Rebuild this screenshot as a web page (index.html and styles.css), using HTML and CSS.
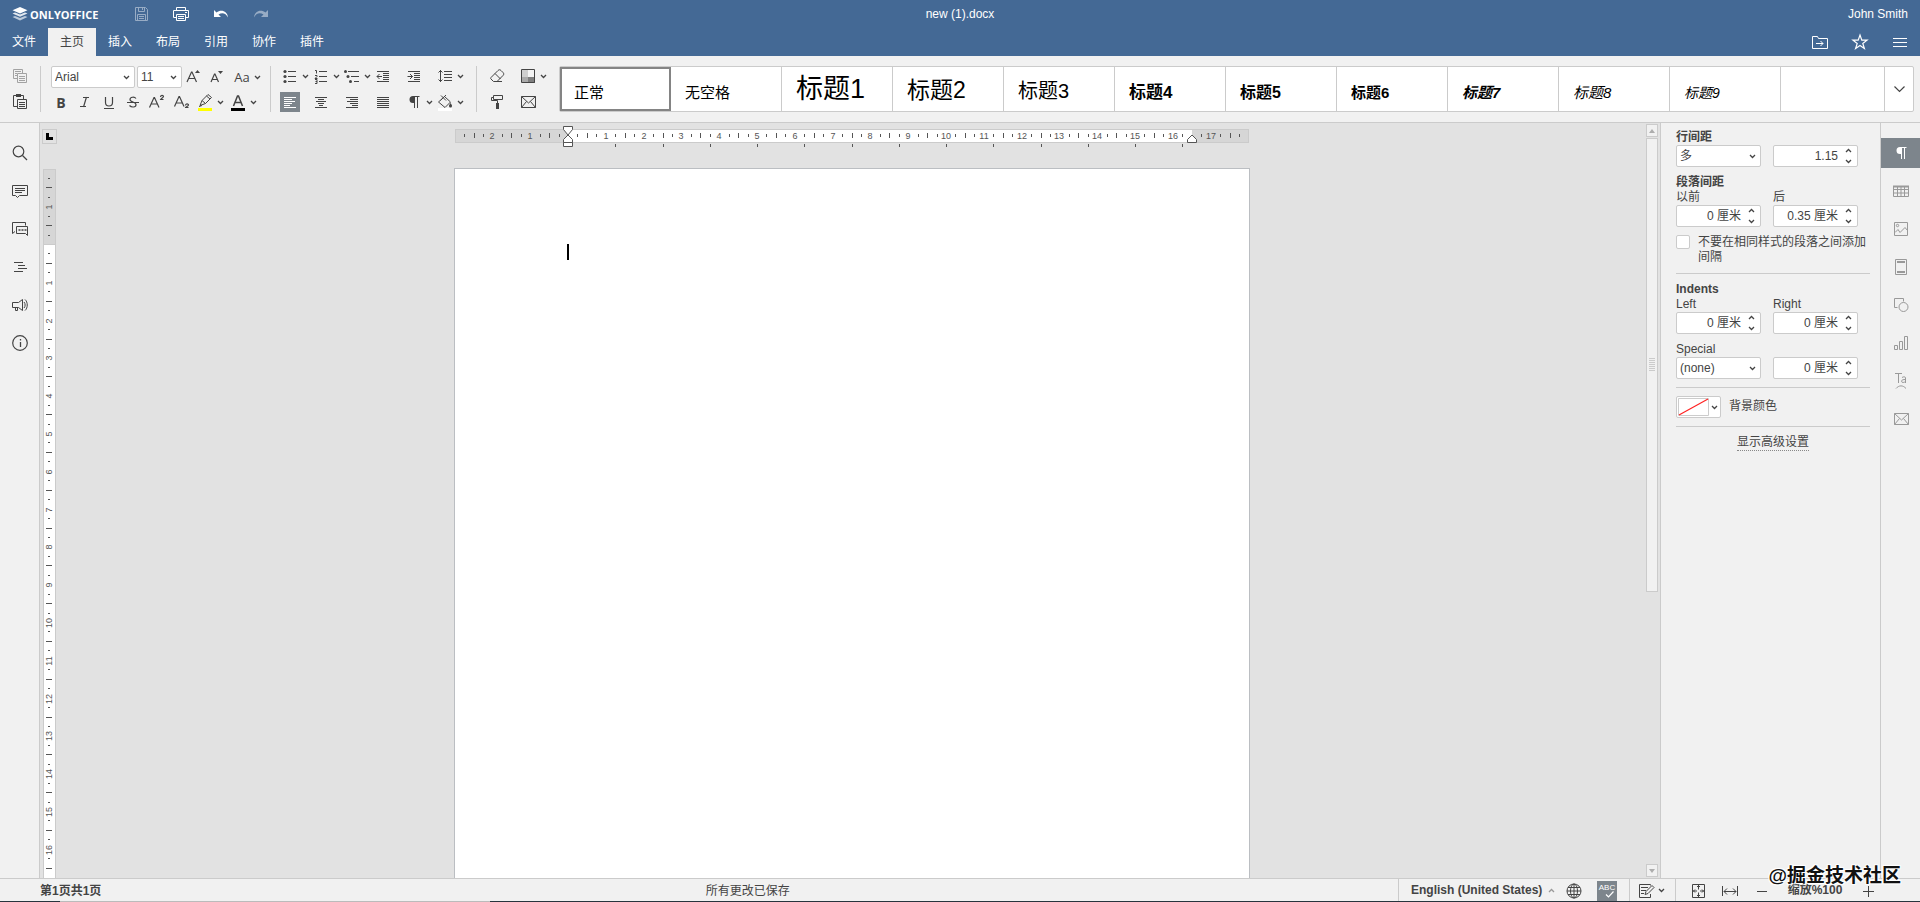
FILE: index.html
```html
<!DOCTYPE html>
<html lang="zh">
<head>
    <meta charset="UTF-8">
    <meta name="viewport" content="width=device-width, initial-scale=1.0">
    <title>new (1).docx</title>
    <link rel="stylesheet" href="styles.css">
</head>
<body>

    <!-- shared icons -->
    <svg class="sprite" aria-hidden="true">
        <symbol id="caret" viewBox="0 0 7 5"><path d="M1 1l2.5 2.5L6 1" fill="none" stroke="currentColor" stroke-width="1.3"/></symbol>
        <symbol id="caret-up" viewBox="0 0 7 5"><path d="M1 4l2.500-2.500L6 4" fill="none" stroke="currentColor" stroke-width="1.3"/></symbol>
        <symbol id="mail" viewBox="0 0 20 20"><path d="M3.500 4.500h14v11h-14zM3.500 4.500l7 6.500 7-6.500M3.500 15.500l5-6M17.500 15.500l-5-6" fill="none" stroke="currentColor"/></symbol>
        <symbol id="pilcrow" viewBox="0 0 20 20"><path d="M13.500 4v12M10.500 4v12M9 4.500h6.500" fill="none" stroke="currentColor"/><path d="M10.500 4H9a3.500 3.500 0 0 0 0 7h1.500z" fill="currentColor"/></symbol>
    </svg>

    <header class="header">
        <div class="title-row">
            <a class="logo" href="#">
                <svg width="16" height="16" viewBox="0 0 16 16"><path d="M8 1l7.500 3.300L8 7.600.5 4.300z" fill="#fff"/><path d="M.5 7.500L3 6.400l5 2.200 5-2.200 2.500 1.100L8 10.800z" fill="#fff" opacity=".85"/><path d="M.5 11L3 9.900l5 2.200 5-2.200 2.500 1.100L8 14.500z" fill="#fff" opacity=".65"/></svg>
                ONLYOFFICE
            </a>
            <div class="quick">
                <button class="icon-btn disabled" aria-label="保存"><svg width="20" height="20" viewBox="0 0 20 20" fill="none" stroke="currentColor"><path d="M4.500 3.500h10l2 2v11h-12zM7.500 3.500v4h6v-4M11.500 4v2M6.500 16.500v-6h8v6M8 12.500h5M8 14.500h5"/></svg></button>
                <button class="icon-btn" aria-label="打印"><svg width="20" height="20" viewBox="0 0 20 20" fill="none" stroke="currentColor"><path d="M5.500 6.500v-3h9v3M5.500 13.500h-3v-7h15v7h-3M5.500 10.500h9v6h-9zM7 12.500h6M7 14.500h6M14 8.500h2"/></svg></button>
                <button class="icon-btn" aria-label="撤消"><svg width="20" height="20" viewBox="0 0 20 20"><path d="M3 6v7h7L7.500 10.500C11 8 15 9 17 13.500 16.500 7 10 5 5.500 8.500z" fill="currentColor"/></svg></button>
                <button class="icon-btn disabled" aria-label="重做"><svg width="20" height="20" viewBox="0 0 20 20"><path d="M17 6v7h-7l2.500-2.500C9 8 5 9 3 13.500 3.500 7 10 5 14.500 8.500z" fill="currentColor"/></svg></button>
            </div>
            <div class="doc-name">new (1).docx</div>
            <div class="user">John Smith</div>
        </div>
        <div class="tab-row">
            <nav class="tabs">
                <button class="tab">文件</button>
                <button class="tab active">主页</button>
                <button class="tab">插入</button>
                <button class="tab">布局</button>
                <button class="tab">引用</button>
                <button class="tab">协作</button>
                <button class="tab">插件</button>
            </nav>
            <div class="header-tools">
                <button class="icon-btn" aria-label="打开文件位置"><svg width="20" height="20" viewBox="0 0 20 20" fill="none" stroke="currentColor"><path d="M2.500 4.500h5l1 2h9v10h-15zM6 11.500h7M10.500 9l2.500 2.500-2.500 2.500"/></svg></button>
                <button class="icon-btn" aria-label="收藏"><svg width="20" height="20" viewBox="0 0 20 20" fill="none" stroke="currentColor" stroke-width="1.200"><path d="M10 3l1.800 5.200h5.200l-4.200 3.200 1.600 5.100L10 13.400l-4.400 3.100 1.600-5.100L3 8.200h5.200z"/></svg></button>
                <button class="icon-btn" aria-label="视图设置"><svg width="20" height="20" viewBox="0 0 20 20" stroke="currentColor"><path d="M3 6.500h14M3 10.500h14M3 14.500h14"/></svg></button>
            </div>
        </div>
    </header>

    <div class="toolbar">
        <div class="group clipboard">
            <button class="icon-btn disabled" aria-label="复制"><svg width="20" height="20" viewBox="0 0 20 20" fill="none" stroke="currentColor"><path d="M7 12.500H3.500v-9h9V7M5 5.500h6M5 7.500h2M5 9.500h2M7.500 7.500h9v9h-9zM9 10.500h6M9 12.500h6M9 14.500h6"/></svg></button>
            <button class="icon-btn" aria-label="粘贴"><svg width="20" height="20" viewBox="0 0 20 20" fill="none" stroke="currentColor"><path d="M7 14.500H3.500v-11h10V7"/><path d="M6 3.500h5" stroke-width="3"/><path d="M7.500 7.500h9v9h-9zM9 10.500h6M9 12.500h6M9 14.500h6"/></svg></button>
        </div>

        <div class="group font-group">
            <div class="row">
                <select class="combo font-name" aria-label="字体"><option>Arial</option></select>
                <select class="combo font-size" aria-label="字号"><option>11</option></select>
                <button class="icon-btn" aria-label="增大字号"><svg width="20" height="20" viewBox="0 0 20 20" fill="none" stroke="currentColor" stroke-width="1.200"><path d="M3 15L7.500 5h.5L12.500 15M5 11.500h6"/><path d="M11 6h5l-2.500-3z" fill="currentColor" stroke="none"/></svg></button>
                <button class="icon-btn" aria-label="减小字号"><svg width="20" height="20" viewBox="0 0 20 20" fill="none" stroke="currentColor" stroke-width="1.200"><path d="M3 15L6.500 7h.5l3.500 8M4.500 12.500h4.500"/><path d="M10 4h5l-2.500 3z" fill="currentColor" stroke="none"/></svg></button>
                <div class="split"><button class="icon-btn glyph" aria-label="更改大小写">Aa</button><button class="caret-btn" aria-label="更多"><svg><use href="#caret"/></svg></button></div>
            </div>
            <div class="row format-row">
                <button class="icon-btn glyph bold" aria-label="加粗">B</button>
                <button class="icon-btn" aria-label="斜体"><svg width="20" height="20" viewBox="0 0 20 20" fill="none" stroke="currentColor"><path d="M8 5.500h6M5 14.500h6M11.500 5l-3 10" stroke-width="1.200"/></svg></button>
                <button class="icon-btn" aria-label="下划线"><svg width="20" height="20" viewBox="0 0 20 20" fill="none" stroke="currentColor"><path d="M6.500 5v5.500a3.500 3.500 0 0 0 7 0V5M5 16.500h10" stroke-width="1.200"/></svg></button>
                <button class="icon-btn" aria-label="删除线"><svg width="20" height="20" viewBox="0 0 20 20" fill="none" stroke="currentColor" stroke-width="1.200"><path d="M13 6.500C11.500 4.500 7 4.800 7 7.500c0 1.500 1.500 2 3 2.500s3 1.200 3 2.700c0 2.800-4.500 3-6.500.8M4 10.500h12"/></svg></button>
                <button class="icon-btn" aria-label="上标"><svg width="20" height="20" viewBox="0 0 20 20" fill="none" stroke="currentColor" stroke-width="1.200"><path d="M2.500 15.500L7 5.500h.5L12 15.500M4.500 12h5.500M13.500 5c0-2 3-2 3-.5 0 1-3 2.500-3 3h3"/></svg></button>
                <button class="icon-btn" aria-label="下标"><svg width="20" height="20" viewBox="0 0 20 20" fill="none" stroke="currentColor" stroke-width="1.200"><path d="M3.500 14.500L8 4.500h.5L13 14.500M5.500 11h5.500M14.500 13.500c0-2 3-2 3-.5 0 1-3 2-3 2.500h3"/></svg></button>
                <div class="split"><button class="icon-btn" aria-label="突出显示颜色"><svg width="20" height="20" viewBox="0 0 20 20" fill="none" stroke="currentColor"><path d="M5 13.500l2-5L13 2.500l3.500 3-6 6zM7 8.500l3.500 3M11.500 4l3.500 3M4 14.500l3-1"/><path d="M3 17.500h14" stroke="#ff0" stroke-width="3"/></svg></button><button class="caret-btn" aria-label="更多"><svg><use href="#caret"/></svg></button></div>
                <div class="split"><button class="icon-btn" aria-label="字体颜色"><svg width="20" height="20" viewBox="0 0 20 20" fill="none" stroke="currentColor" stroke-width="1.500"><path d="M5.500 14l4-10h1l4 10M7 10.500h6"/><path d="M3 17.500h14" stroke="#000" stroke-width="3"/></svg></button><button class="caret-btn" aria-label="更多"><svg><use href="#caret"/></svg></button></div>
            </div>
        </div>

        <div class="group para-group">
            <div class="split"><button class="icon-btn" aria-label="项目符号"><svg width="20" height="20" viewBox="0 0 20 20" stroke="currentColor"><path d="M8 5.500h8M8 10.500h8M8 15.500h8"/><g fill="currentColor" stroke="none"><circle cx="5" cy="5.500" r="1.600"/><circle cx="5" cy="10.500" r="1.600"/><circle cx="5" cy="15.500" r="1.600"/></g></svg></button><button class="caret-btn" aria-label="更多"><svg><use href="#caret"/></svg></button></div>
            <div class="split"><button class="icon-btn" aria-label="编号"><svg width="20" height="20" viewBox="0 0 20 20" fill="none" stroke="currentColor"><path d="M8 5.500h8M8 10.500h8M8 15.500h8M4 4.500h1.500v3M4 9.500h2v1l-2 2h2.500M4 13.500h2v4H4M4.500 15.500H6"/></svg></button><button class="caret-btn" aria-label="更多"><svg><use href="#caret"/></svg></button></div>
            <div class="split"><button class="icon-btn" aria-label="多级列表"><svg width="20" height="20" viewBox="0 0 20 20" stroke="currentColor"><path d="M6 5.500h11M9 10.500h8M12 15.500h5"/><g fill="currentColor" stroke="none"><circle cx="3.500" cy="5.500" r="1.500"/><circle cx="6" cy="10.500" r="1.500"/><circle cx="8.500" cy="15.500" r="1.500"/></g></svg></button><button class="caret-btn" aria-label="更多"><svg><use href="#caret"/></svg></button></div>
            <div class="split"><button class="icon-btn" aria-label="减少缩进"><svg width="20" height="20" viewBox="0 0 20 20" fill="none" stroke="currentColor"><path d="M4 5.500h12M10 7.500h6M10 9.500h6M10 11.500h6M10 13.500h6M4 15.500h12M4 10.500h5M6.500 8L4 10.500 6.500 13"/></svg></button></div>
            <div class="split"><button class="icon-btn" aria-label="增加缩进"><svg width="20" height="20" viewBox="0 0 20 20" fill="none" stroke="currentColor"><path d="M4 5.500h12M10 7.500h6M10 9.500h6M10 11.500h6M10 13.500h6M4 15.500h12M3.500 10.500h5M6 8l2.500 2.500L6 13"/></svg></button></div>
            <div class="split"><button class="icon-btn" aria-label="行间距"><svg width="20" height="20" viewBox="0 0 20 20" fill="none" stroke="currentColor"><path d="M9 5.500h8M9 8.500h8M9 11.500h8M9 14.500h8M5.500 4v12M3.500 6.500l2-2 2 2M3.500 13.500l2 2 2-2"/></svg></button><button class="caret-btn" aria-label="更多"><svg><use href="#caret"/></svg></button></div>

            <div class="split"><button class="icon-btn pressed" aria-label="左对齐"><svg width="20" height="20" viewBox="0 0 20 20" stroke="currentColor"><path d="M4 5.500h12M4 7.500h8M4 9.500h11M4 11.500h8M4 13.500h6M4 15.500h12"/></svg></button></div>
            <div class="split"><button class="icon-btn" aria-label="居中"><svg width="20" height="20" viewBox="0 0 20 20" stroke="currentColor"><path d="M4 5.500h12M7 7.500h6M5 9.500h10M7 11.500h6M8 13.500h4M4 15.500h12"/></svg></button></div>
            <div class="split"><button class="icon-btn" aria-label="右对齐"><svg width="20" height="20" viewBox="0 0 20 20" stroke="currentColor"><path d="M4 5.500h12M8 7.500h8M5 9.500h11M8 11.500h8M10 13.500h6M4 15.500h12"/></svg></button></div>
            <div class="split"><button class="icon-btn" aria-label="两端对齐"><svg width="20" height="20" viewBox="0 0 20 20" stroke="currentColor"><path d="M4 5.500h12M4 7.500h12M4 9.500h12M4 11.500h12M4 13.500h12M4 15.500h12"/></svg></button></div>
            <div class="split"><button class="icon-btn" aria-label="非打印字符"><svg width="20" height="20"><use href="#pilcrow"/></svg></button><button class="caret-btn" aria-label="更多"><svg><use href="#caret"/></svg></button></div>
            <div class="split"><button class="icon-btn" aria-label="底纹颜色"><svg width="20" height="20" viewBox="0 0 20 20" fill="none" stroke="currentColor"><path d="M3 17.500h14" stroke="#fff" stroke-width="3"/><path d="M3.500 10l6-5.500 6 5.500-5.500 5.500zM6 3.500l5 5M11 3L5.500 8.500"/><path d="M15.500 11c1 1.500 1.500 2 1.500 3a1.500 1.500 0 0 1-3 0c0-1 .5-1.500 1.500-3z" fill="currentColor" stroke="none"/></svg></button><button class="caret-btn" aria-label="更多"><svg><use href="#caret"/></svg></button></div>
        </div>

        <div class="group misc-group">
            <div class="split"><button class="icon-btn" aria-label="清除样式"><svg width="20" height="20" viewBox="0 0 20 20" fill="none" stroke="currentColor"><path d="M4 11.500l7-7c1-1 2-1 3 0l2 2c1 1 1 2 0 3l-6 6H6.500l-2.500-2.500c-.5-.5-.5-1 0-1.500zM8 7.500l5.500 5.500M10 15.500h5"/></svg></button></div>
            <div class="split"><button class="icon-btn" aria-label="颜色方案"><svg width="20" height="20" viewBox="0 0 20 20"><path d="M4 4h6v7H4z" fill="#cfcfcf"/><path d="M10 4h7v7h-7z" fill="#f4f4f4"/><path d="M4 11h6v6H4z" fill="#aaa"/><path d="M10 11h7v6h-7z" fill="#808080"/><path d="M3.500 3.500h13v13h-13z" fill="none" stroke="currentColor"/></svg></button><button class="caret-btn" aria-label="更多"><svg><use href="#caret"/></svg></button></div>
            <div class="split"><button class="icon-btn" aria-label="复制样式"><svg width="20" height="20" viewBox="0 0 20 20" fill="none" stroke="currentColor"><path d="M6.500 3.500h9v4h-9zM6 5.500H4.500v3h6V11"/><path d="M10.500 11v6" stroke-width="3"/></svg></button></div>
            <div class="split"><button class="icon-btn" aria-label="邮件合并"><svg width="20" height="20"><use href="#mail"/></svg></button></div>
        </div>

        <div class="gallery">
            <div class="styles">
                <button class="style-item selected"><span class="s-normal">正常</span></button>
                <button class="style-item"><span class="s-normal">无空格</span></button>
                <button class="style-item"><span class="s-h1">标题1</span></button>
                <button class="style-item"><span class="s-h2">标题2</span></button>
                <button class="style-item"><span class="s-h3">标题3</span></button>
                <button class="style-item"><span class="s-h4">标题4</span></button>
                <button class="style-item"><span class="s-h5">标题5</span></button>
                <button class="style-item"><span class="s-h6">标题6</span></button>
                <button class="style-item"><span class="s-h7">标题7</span></button>
                <button class="style-item"><span class="s-h8">标题8</span></button>
                <button class="style-item"><span class="s-h9">标题9</span></button>
                <button class="style-item" aria-label="标题"></button>
            </div>
            <button class="gallery-more" aria-label="更多样式"><svg width="13" height="9" viewBox="0 0 13 9"><path d="M1.500 1.500l5 5 5-5" fill="none" stroke="currentColor" stroke-width="1.200"/></svg></button>
        </div>
    </div>

    <main class="workspace">
        <aside class="left-menu">
            <button class="icon-btn" aria-label="搜索"><svg width="20" height="20" viewBox="0 0 20 20" fill="none" stroke="currentColor" stroke-width="1.200"><circle cx="8.500" cy="8.500" r="5.300"/><path d="M12.500 12.500l4.500 4.500"/></svg></button>
            <button class="icon-btn" aria-label="批注"><svg width="20" height="20" viewBox="0 0 20 20" fill="none" stroke="currentColor"><path d="M2.500 4.500h15v10h-8l-2 2-2-2h-3zM5 7.500h10M5 9.500h10M5 11.500h7"/></svg></button>
            <button class="icon-btn" aria-label="聊天"><svg width="20" height="20" viewBox="0 0 20 20" fill="none" stroke="currentColor"><path d="M5 12.500l-2.500 2v-11h13v3M6.500 7.500h11v9l-2-2h-9z"/><path d="M8.500 11h2M11.500 11h2M14.500 11h2" stroke-width="1.500"/></svg></button>
            <button class="icon-btn" aria-label="导航"><svg width="20" height="20" viewBox="0 0 20 20" stroke="currentColor"><path d="M4 5.500h9M8 8.500h7M8 11.500h9M4 14.500h9"/></svg></button>
            <button class="icon-btn" aria-label="反馈"><svg width="20" height="20" viewBox="0 0 20 20" fill="none" stroke="currentColor"><path d="M2.500 7.500h6l4-3v11l-4-3h-6zM5.500 12.500v3h2v-3M14 7c1.500 1.500 1.500 4.500 0 6M15 4.500c3 2.500 3 8.500 0 11"/></svg></button>
            <button class="icon-btn" aria-label="关于"><svg width="20" height="20" viewBox="0 0 20 20" fill="none" stroke="currentColor"><circle cx="10" cy="10" r="7.300" stroke-width="1.200"/><path d="M10.500 9v5M10.500 6v1.500" stroke-width="1.300"/></svg></button>
        </aside>

        <section class="editor">
            <div class="corner"><button class="tab-type" aria-label="制表符"><svg width="7" height="7" viewBox="0 0 7 7"><path d="M1.500 0v5.500H7" fill="none" stroke="#000" stroke-width="3"/></svg></button></div>
            <div class="h-ruler"><svg id="hRuler" width="794" height="24"></svg></div>
            <div class="v-ruler"><svg id="vRuler" width="13"></svg></div>
            <div class="canvas">
                <div class="page"><div class="cursor"></div></div>
            </div>
            <div class="scrollbar">
                <button class="scroll-btn" aria-label="向上"><svg width="6" height="4"><path d="M3 0l3 4H0z" fill="#adadad"/></svg></button>
                <div class="track"><div class="thumb"></div></div>
                <button class="scroll-btn" aria-label="向下"><svg width="6" height="4"><path d="M3 4l3-4H0z" fill="#adadad"/></svg></button>
            </div>
        </section>

        <aside class="settings">
            <div class="field-row">
                <div class="field"><label class="strong" for="lineRule">行间距</label><select class="combo" id="lineRule"><option>多</option></select></div>
                <div class="field end"><div class="spin"><input type="text" value="1.15" aria-label="行间距值"><div class="arrows"><button aria-label="增加"><svg><use href="#caret-up"/></svg></button><button aria-label="减少"><svg><use href="#caret"/></svg></button></div></div></div>
            </div>
            <div class="block">
                <h3>段落间距</h3>
                <div class="field-row">
                    <div class="field"><label for="before">以前</label><div class="spin"><input type="text" id="before" value="0 厘米"><div class="arrows"><button aria-label="增加"><svg><use href="#caret-up"/></svg></button><button aria-label="减少"><svg><use href="#caret"/></svg></button></div></div></div>
                    <div class="field"><label for="after">后</label><div class="spin"><input type="text" id="after" value="0.35 厘米"><div class="arrows"><button aria-label="增加"><svg><use href="#caret-up"/></svg></button><button aria-label="减少"><svg><use href="#caret"/></svg></button></div></div></div>
                </div>
            </div>
            <label class="check"><input type="checkbox"><span>不要在相同样式的段落之间添加间隔</span></label>
            <hr>
            <div class="block">
                <h3>Indents</h3>
                <div class="field-row">
                    <div class="field"><label for="left">Left</label><div class="spin"><input type="text" id="left" value="0 厘米"><div class="arrows"><button aria-label="增加"><svg><use href="#caret-up"/></svg></button><button aria-label="减少"><svg><use href="#caret"/></svg></button></div></div></div>
                    <div class="field"><label for="right">Right</label><div class="spin"><input type="text" id="right" value="0 厘米"><div class="arrows"><button aria-label="增加"><svg><use href="#caret-up"/></svg></button><button aria-label="减少"><svg><use href="#caret"/></svg></button></div></div></div>
                </div>
            </div>
            <div class="field-row">
                <div class="field"><label for="special">Special</label><select class="combo" id="special"><option>(none)</option></select></div>
                <div class="field end"><div class="spin"><input type="text" value="0 厘米" aria-label="Special value"><div class="arrows"><button aria-label="增加"><svg><use href="#caret-up"/></svg></button><button aria-label="减少"><svg><use href="#caret"/></svg></button></div></div></div>
            </div>
            <hr>
            <div class="color-row">
                <button class="color-btn" id="bgColor"><svg width="31" height="18" viewBox="0 0 31 18"><path d="M.5.500h30v17H.5z" fill="#fff" stroke="#ccc"/><path d="M1 17L30 1" stroke="#f22" stroke-width="1.200"/></svg><svg class="caret"><use href="#caret"/></svg></button>
                <label for="bgColor">背景颜色</label>
            </div>
            <hr>
            <div class="advanced"><a href="#">显示高级设置</a></div>
        </aside>

        <nav class="right-menu">
            <button class="pressed" aria-label="段落设置"><svg width="20" height="20"><use href="#pilcrow"/></svg></button>
            <button aria-label="表格设置"><svg width="20" height="20" viewBox="0 0 20 20" fill="none" stroke="currentColor"><path d="M2.500 5.500h15v10h-15zM2.500 8.500h15M2.500 12h15M6.500 6v9.500M10 6v9.500M13.500 6v9.500"/><path d="M2 5.500h16" stroke-width="2"/></svg></button>
            <button aria-label="图像设置"><svg width="20" height="20" viewBox="0 0 20 20" fill="none" stroke="currentColor"><path d="M3.500 3.500h13v13h-13zM4 13.500l3-3 2 3 5-5 2.500 3"/><circle cx="6.500" cy="6.500" r="1.200"/></svg></button>
            <button aria-label="页眉和页脚设置"><svg width="20" height="20" viewBox="0 0 20 20" fill="none" stroke="currentColor"><path d="M4.500 2.500h11v15h-11z"/><path d="M6 5h8M6 15h8" stroke-width="2"/></svg></button>
            <button aria-label="形状设置"><svg width="20" height="20" viewBox="0 0 20 20" fill="none" stroke="currentColor"><path d="M6.500 12.500h-3v-9h9v3"/><circle cx="12.500" cy="12" r="4.500"/></svg></button>
            <button aria-label="图表设置"><svg width="20" height="20" viewBox="0 0 20 20" fill="none" stroke="currentColor"><path d="M3.500 12.500h3v4h-3zM8.500 8.500h3v8h-3zM13.500 3.500h3v13h-3z"/></svg></button>
            <button aria-label="文本艺术设置"><svg width="20" height="20" viewBox="0 0 20 20" fill="none" stroke="currentColor"><path d="M4 2.500h7M7.500 2.500V12M11 6.500c1.500-1 3.500-1 3.500.5v5M14.500 8.500c-2 0-4 .2-4 1.800s3 1.500 4 0M5 17.500c3-3.500 7-3.500 10 0"/></svg></button>
            <button aria-label="邮件合并设置"><svg width="20" height="20"><use href="#mail"/></svg></button>
        </nav>
    </main>

    <footer class="statusbar">
        <div class="pages">第1页共1页</div>
        <div class="saved">所有更改已保存</div>
        <div class="cell lang-cell">
            <button class="lang">English (United States)<svg class="caret"><use href="#caret-up"/></svg></button>
            <button class="icon-btn" aria-label="文档语言"><svg width="20" height="20" viewBox="0 0 20 20" fill="none" stroke="currentColor"><circle cx="10" cy="10" r="7"/><ellipse cx="10" cy="10" rx="3.500" ry="7"/><path d="M10 3v14M3 10h14M4 6.500h12M4 13.500h12"/></svg></button>
            <button class="icon-btn pressed" aria-label="拼写检查"><svg width="20" height="20" viewBox="0 0 20 20"><text x="10" y="9" text-anchor="middle" class="abc">ABC</text><path d="M9 13.500l2.500 2.500 5-5.500" fill="none" stroke="currentColor" stroke-width="1.200"/></svg></button>
        </div>
        <div class="cell review-cell">
            <button class="icon-btn" aria-label="跟踪更改"><svg width="20" height="20" viewBox="0 0 20 20" fill="none" stroke="currentColor"><path d="M14.500 13v3.500h-11v-13h11v1M5 6.500h7M5 9.500h5M5 12.500h3M9 13.500l1-3L16 4.500l2 2-6 6z"/></svg></button><button class="caret-btn" aria-label="更多"><svg><use href="#caret"/></svg></button>
        </div>
        <div class="cell zoom-cell">
            <button class="icon-btn" aria-label="适合页面"><svg width="20" height="20" viewBox="0 0 20 20" fill="none" stroke="currentColor"><path d="M4.500 3.500h12v13h-12zM10.500 4v4.500M9 6l1.500-1.500L12 6M10.500 16v-4.500M9 14l1.500 1.500L12 14M5 10h4M7 8.500L5.500 10 7 11.500M16 10h-4M14 8.500l1.500 1.500L14 11.500"/></svg></button>
            <button class="icon-btn" aria-label="适合宽度"><svg width="20" height="20" viewBox="0 0 20 20" fill="none" stroke="currentColor"><path d="M2.500 5v10M17.500 5v10M4 10.500h12M7 7.500l-3 3 3 3M13 7.500l3 3-3 3"/></svg></button>
            <button class="icon-btn" aria-label="缩小"><svg width="20" height="20" viewBox="0 0 20 20" stroke="currentColor"><path d="M5 10.500h10"/></svg></button>
            <button class="zoom">缩放%100</button>
            <button class="icon-btn" aria-label="放大"><svg width="20" height="20" viewBox="0 0 20 20" stroke="currentColor"><path d="M5 10.500h11M10.500 5v11"/></svg></button>
        </div>
        <div class="watermark">@掘金技术社区</div>
    </footer>

    <script>
        const CM = 37.8; // 1 cm at 96 dpi

        function add(svg, name, attrs, text) {
            const el = document.createElementNS("http://www.w3.org/2000/svg", name);
            for (const key in attrs) {
                el.setAttribute(key, attrs[key]);
            }
            if (text) {
                el.textContent = text;
            }
            svg.appendChild(el);
        }

        function drawHorizontal() {
            const svg = document.getElementById("hRuler");
            const start = 113, end = 737, width = 794;
            add(svg, "rect", { x: 0.5, y: 3.5, width: width - 1, height: 13, class: "ruler-margin" });
            add(svg, "rect", { x: start, y: 4, width: end - start, height: 12, fill: "#fff" });
            for (let i = -11; i <= 71; i++) {
                const x = Math.round(start + i * CM / 4);
                if (i === 0 || x > width - 5 || Math.abs(x - end) < 5) continue;
                if (i % 4 === 0) {
                    add(svg, "text", { x: x, y: 13, "text-anchor": "middle" }, String(Math.abs(i / 4)));
                } else {
                    const h = i % 2 === 0 ? 5 : 3;
                    add(svg, "rect", { x: x, y: h === 5 ? 7 : 8, width: 1, height: h, class: "tick" });
                }
            }
            // default tab stops
            for (let i = 1; i <= 13; i++) {
                add(svg, "rect", { x: Math.round(start + i * CM * 1.25), y: 18, width: 1, height: 3, class: "tick" });
            }
            add(svg, "path", { d: "M108.5 .5h9v3l-4.500 5.500-4.500-5.500zM113 9l4.500 4.500v3h-9v-3zM108.500 16.500h9v4h-9z", class: "marker" });
            add(svg, "path", { d: "M737 9l4.500 4.500v3h-9v-3z", class: "marker" });
        }

        function drawVertical() {
            const svg = document.getElementById("vRuler");
            const start = 76;
            // only the visible part of the page
            const height = Math.min(1123, svg.parentNode.clientHeight - 1);
            svg.setAttribute("height", height);
            add(svg, "rect", { x: 0.5, y: 0.5, width: 12, height: 1122, fill: "#fff", stroke: "#cbcbcb" });
            add(svg, "rect", { x: 0.5, y: 0.5, width: 12, height: start - 1, class: "ruler-margin" });
            for (let i = -7; start + i * CM / 4 < height - 1; i++) {
                const y = Math.round(start + i * CM / 4);
                if (i === 0) continue;
                if (i % 4 === 0) {
                    if (y > height - 8) continue;
                    add(svg, "text", { transform: "translate(9 " + y + ") rotate(-90)", "text-anchor": "middle" }, String(Math.abs(i / 4)));
                } else {
                    const w = i % 2 === 0 ? 6 : 2;
                    add(svg, "rect", { x: w === 6 ? 3 : 5, y: y - 1, width: w, height: 1, class: "tick" });
                }
            }
        }

        drawHorizontal();
        drawVertical();
    </script>
</body>
</html>
```

FILE: styles.css
```css
* {
    box-sizing: border-box;
    margin: 0;
    padding: 0;
}

body {
    font-family: "Liberation Sans", "Noto Sans CJK SC", sans-serif;
    font-size: 12px;
    line-height: 15px;
    color: #444;
    background: #f1f1f1;
    display: flex;
    flex-direction: column;
    height: 100vh;
    overflow: hidden;
}

button, input, select {
    font: inherit;
    color: inherit;
    border: none;
    background: none;
    border-radius: 0;
}

button {
    cursor: pointer;
}

svg {
    display: block;
}

.sprite {
    position: absolute;
    width: 0;
    height: 0;
}

.icon-btn {
    width: 24px;
    height: 20px;
    flex: none;
    display: flex;
    align-items: center;
    justify-content: center;
}

.disabled {
    opacity: 0.45;
}

.pressed {
    background: #7d858c;
    color: #fff;
}

/* Header */
.header {
    background: #446995;
    color: #fff;
    flex: none;
}

.title-row {
    display: grid;
    grid-template-columns: 1fr auto 1fr;
    grid-template-areas: "left name user";
    align-items: center;
    height: 28px;
    padding: 0 12px;
}

.logo {
    grid-area: left;
    display: flex;
    align-items: center;
    gap: 2px;
    color: #fff;
    text-decoration: none;
    font-family: "Open Sans", sans-serif;
    font-size: 11px;
    font-weight: bold;
}

.quick {
    grid-area: left;
    display: flex;
    gap: 16px;
    margin-left: 117px;
}

.doc-name {
    grid-area: name;
}

.user {
    grid-area: user;
    text-align: right;
}

.tab-row {
    display: flex;
    justify-content: space-between;
    height: 28px;
}

.tabs {
    display: flex;
}

.tab {
    width: 48px;
    height: 28px;
}

.tab.active {
    background: #f1f1f1;
    color: #444;
}

.header-tools {
    display: flex;
    align-items: center;
    gap: 16px;
    padding-right: 8px;
}

/* Toolbar */
.toolbar {
    display: flex;
    align-items: flex-start;
    height: 67px;
    flex: none;
    padding: 10px 6px 0 0;
    border-bottom: 1px solid #cbcbcb;
}

.group {
    height: 46px;
    border-right: 1px solid #cbcbcb;
    padding: 0 7px;
}

.clipboard {
    width: 41px;
    padding: 0 8px;
    display: flex;
    flex-direction: column;
    justify-content: space-between;
}

.font-group {
    width: 230px;
    display: flex;
    flex-direction: column;
    justify-content: space-between;
}

.row {
    display: flex;
    align-items: center;
}

.format-row {
    padding-left: 1px;
}

.split {
    display: flex;
    align-items: center;
}

.caret-btn {
    width: 7px;
    height: 20px;
    display: flex;
    align-items: center;
}

.caret-btn svg, .caret {
    width: 7px;
    height: 5px;
    flex: none;
}

.font-group .caret-btn {
    width: 9px;
}

.glyph {
    font-family: "Open Sans", sans-serif;
    font-size: 13px;
}

.bold {
    font-size: 14px;
    font-weight: bold;
}

.combo {
    appearance: none;
    width: 100%;
    height: 22px;
    padding: 0 18px 0 3px;
    border: 1px solid #cbcbcb;
    border-radius: 2px;
    background: #fff url("data:image/svg+xml,%3Csvg xmlns='http://www.w3.org/2000/svg' width='7' height='5'%3E%3Cpath d='M1 1l2.500 2.500L6 1' fill='none' stroke='%23444' stroke-width='1.300'/%3E%3C/svg%3E") no-repeat right 4px center;
}

.font-name {
    width: 84px;
    margin: 0 2px 0 3px;
}

.font-size {
    width: 45px;
}

.para-group {
    display: grid;
    grid-template-columns: repeat(6, 31px);
    align-content: space-between;
    width: 206px;
}

.para-group .pressed {
    width: 20px;
    margin: 0 2px;
}

.misc-group {
    display: grid;
    grid-template-columns: repeat(2, 31px);
    align-content: space-between;
    border-right: none;
    width: 82px;
    padding-left: 8px;
}

.gallery {
    flex: 1;
    min-width: 0;
    display: flex;
    height: 46px;
    border: 1px solid #cbcbcb;
    border-radius: 2px;
    background: #fff;
}

.styles {
    flex: 1;
    min-width: 0;
    display: flex;
    overflow: hidden;
}

.style-item {
    flex: none;
    width: 111px;
    height: 44px;
    padding: 16px 0 8px 14px;
    border-right: 1px solid #cbcbcb;
    text-align: left;
    font-size: 14px;
    line-height: 20px;
    color: #000;
    white-space: nowrap;
}

.style-item span {
    line-height: 0;
}

.style-item.selected {
    border: none;
    box-shadow: inset 0 0 0 2px #848484;
}

.s-normal { font-size: 15px; }
.s-h1 { font-size: 27px; }
.s-h2 { font-size: 23px; }
.s-h3 { font-size: 20px; }
.s-h4 { font-size: 17px; font-weight: bold; }
.s-h5 { font-size: 16px; font-weight: bold; }
.s-h6 { font-size: 15px; font-weight: bold; }
.s-h7 { font-size: 15px; font-weight: bold; font-style: italic; }
.s-h8 { font-size: 15px; font-style: italic; }
.s-h9 { font-size: 14px; font-style: italic; }

.gallery-more {
    width: 29px;
    display: flex;
    align-items: center;
    justify-content: center;
    border-left: 1px solid #cbcbcb;
}

/* Workspace */
.workspace {
    flex: 1;
    min-height: 0;
    display: flex;
}

.left-menu {
    width: 40px;
    flex: none;
    display: flex;
    flex-direction: column;
    align-items: center;
    gap: 18px;
    padding-top: 20px;
    border-right: 1px solid #cbcbcb;
}

.editor {
    flex: 1;
    min-width: 0;
    display: grid;
    grid-template-columns: 18px 1fr 14px;
    grid-template-rows: 45px 1fr;
    background: #e2e2e2;
    overflow: hidden;
}

.corner {
    padding: 6px 0 0 2px;
}

.tab-type {
    width: 15px;
    height: 15px;
    border: 1px solid #cbcbcb;
    display: flex;
    align-items: center;
    justify-content: center;
}

.h-ruler {
    display: flex;
    justify-content: center;
    padding-top: 3px;
}

.v-ruler {
    grid-column: 1;
    grid-row: 2;
    padding: 1px 0 0 3px;
    min-height: 0;
    overflow: hidden;
}

.canvas {
    grid-column: 2;
    grid-row: 2;
    min-height: 0;
    overflow: hidden;
    display: flex;
    justify-content: center;
}

.page {
    width: 796px;
    height: 1125px;
    padding: 75px 112px;
    background: #fff;
    border: 1px solid #bbbec2;
}

.cursor {
    width: 2px;
    height: 16px;
    background: #000;
}

.scrollbar {
    grid-column: 3;
    grid-row: 1 / 3;
    min-height: 0;
    display: flex;
    flex-direction: column;
    gap: 1px;
    padding: 1px 2px 1px 0;
}

.scroll-btn {
    width: 12px;
    height: 13px;
    flex: none;
    display: flex;
    align-items: center;
    justify-content: center;
    border: 1px solid #cbcbcb;
    background: #f1f1f1;
}

.track {
    flex: 1;
}

.thumb {
    height: 62.6%;
    border: 1px solid #cbcbcb;
    background: repeating-linear-gradient(#cbcbcb 0 1px, #f1f1f1 1px 2px) center / 6px 13px no-repeat #f1f1f1;
}

.ruler-margin {
    fill: #d6d6d6;
    stroke: #cbcbcb;
}

.tick {
    fill: #555;
}

.marker {
    fill: #fff;
    stroke: #555;
}

#hRuler text, #vRuler text {
    font-size: 9px;
    fill: #555;
}

/* Paragraph settings */
.settings {
    width: 221px;
    flex: none;
    display: flex;
    flex-direction: column;
    gap: 8px;
    padding: 7px 10px 0 15px;
    border-left: 1px solid #cbcbcb;
    border-right: 1px solid #cbcbcb;
}

.field-row {
    display: grid;
    grid-template-columns: 85px 85px;
    gap: 12px;
}

.field label {
    display: block;
    white-space: nowrap;
}

.field.end {
    align-self: end;
}

.settings h3, .strong {
    font-size: 12px;
    font-weight: bold;
}

.spin {
    display: flex;
    height: 22px;
    border: 1px solid #cbcbcb;
    border-radius: 2px;
    background: #fff;
}

.spin input {
    flex: 1;
    min-width: 0;
    text-align: right;
}

.arrows {
    width: 19px;
    display: flex;
    flex-direction: column;
    gap: 2px;
    padding-left: 4px;
}

.arrows button {
    flex: 1;
    display: flex;
    align-items: center;
    justify-content: center;
    width: 13px;
}

.arrows svg {
    width: 7px;
    height: 5px;
}

.check {
    display: flex;
    gap: 8px;
}

.check input {
    appearance: none;
    width: 14px;
    height: 14px;
    flex: none;
    border: 1px solid #cbcbcb;
    border-radius: 2px;
    background: #fff;
}

.settings hr {
    height: 1px;
    border: none;
    background: #cbcbcb;
}

.color-row {
    display: flex;
    gap: 8px;
    line-height: 20px;
}

.color-btn {
    width: 45px;
    height: 22px;
    display: flex;
    align-items: center;
    gap: 2px;
    padding-left: 1px;
    border: 1px solid #cbcbcb;
    border-radius: 2px;
    background: #fff;
}

.advanced {
    text-align: center;
}

.advanced a {
    display: inline-block;
    color: #444;
    text-decoration: none;
    border-bottom: 1px dotted #888;
}

.right-menu {
    width: 39px;
    flex: none;
    display: flex;
    flex-direction: column;
    gap: 8px;
    padding-top: 15px;
}

.right-menu button {
    height: 30px;
    display: flex;
    align-items: center;
    justify-content: center;
    color: #999;
}

.right-menu .pressed {
    color: #fff;
}

/* Status bar */
.statusbar {
    position: relative;
    flex: none;
    display: flex;
    align-items: stretch;
    height: 24px;
    border-top: 1px solid #cbcbcb;
    border-bottom: 1px solid #27333d;
    font-weight: bold;
}

.statusbar::after {
    content: "";
    position: absolute;
    left: 60px;
    bottom: -1px;
    width: 430px;
    height: 1px;
    background: #bbb;
}

.pages {
    padding: 5px 0 0 40px;
}

.saved {
    flex: 1;
    padding: 5px 4px 0 0;
    text-align: center;
    font-weight: normal;
}

.cell {
    display: flex;
    align-items: center;
    padding-top: 1px;
    border-left: 1px solid #cbcbcb;
}

.lang-cell {
    width: 231px;
    padding-left: 12px;
    gap: 3px;
}

.lang {
    display: flex;
    align-items: center;
    gap: 6px;
    margin-right: 4px;
    font-weight: bold;
}

.lang .caret {
    color: #999;
}

.lang-cell .pressed {
    width: 20px;
    margin-left: 8px;
}

.abc {
    font-size: 8px;
    font-weight: normal;
    fill: #fff;
}

.review-cell {
    width: 46px;
    padding-left: 4px;
}

.zoom-cell {
    width: 245px;
    padding-left: 10px;
    gap: 8px;
}

.zoom {
    width: 66px;
    font-weight: bold;
}

.watermark {
    position: absolute;
    right: 19px;
    bottom: 13px;
    font-size: 19px;
    line-height: 24px;
    font-weight: bold;
    color: #111;
    text-shadow: 1px 1px 1px #fff, -1px -1px 1px #fff, 1px -1px 1px #fff, -1px 1px 1px #fff;
    pointer-events: none;
}
```
